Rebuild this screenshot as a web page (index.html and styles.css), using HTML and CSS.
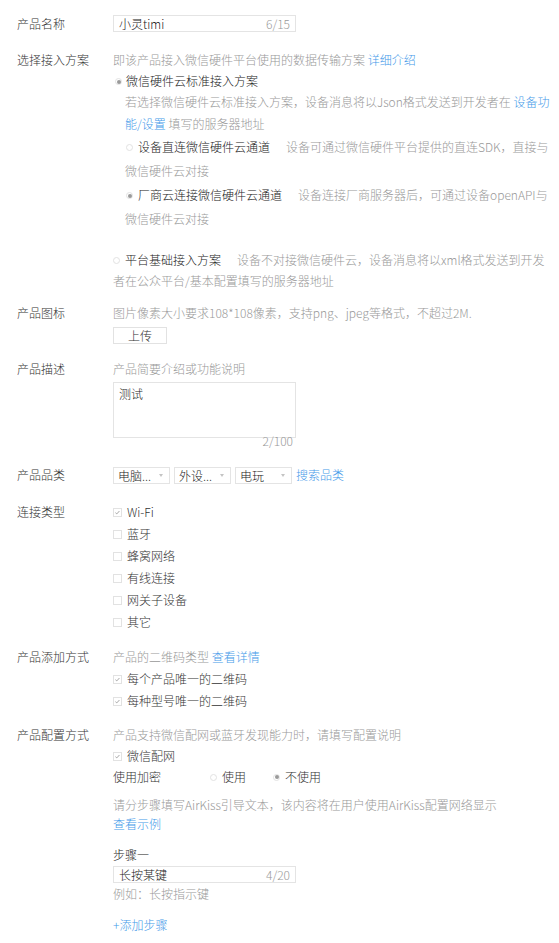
FILE: index.html
```html
<!DOCTYPE html>
<html lang="zh-CN">
<head>
  <meta charset="UTF-8" />
  <meta name="viewport" content="width=device-width, initial-scale=1.0" />
  <title>产品信息</title>
  <link rel="stylesheet" href="styles.css">
</head>
<body>
  <div class="form">

    <div class="row row-name">
      <div class="label">产品名称</div>
      <div class="field">
        <div class="input-box"><span class="val">小灵timi</span><span class="count">6/15</span></div>
      </div>
    </div>

    <div class="row row-plan">
      <div class="label">选择接入方案</div>
      <div class="field">
        <p class="hint">即该产品接入微信硬件平台使用的数据传输方案 <a href="#">详细介绍</a></p>
        <div class="opt-main">
          <div class="opt-title"><span class="radio on"></span>微信硬件云标准接入方案</div>
          <p class="hint opt-desc">若选择微信硬件云标准接入方案，设备消息将以Json格式发送到开发者在 <a href="#">设备功能/设置</a> 填写的服务器地址</p>
          <p class="hint sub"><span class="radio"></span><span class="dark">设备直连微信硬件云通道</span>设备可通过微信硬件平台提供的直连SDK，直接与微信硬件云对接</p>
          <p class="hint sub"><span class="radio on"></span><span class="dark">厂商云连接微信硬件云通道</span>设备连接厂商服务器后，可通过设备openAPI与微信硬件云对接</p>
        </div>
        <p class="hint opt-basic"><span class="radio"></span><span class="dark">平台基础接入方案</span>设备不对接微信硬件云，设备消息将以xml格式发送到开发者在公众平台/基本配置填写的服务器地址</p>
      </div>
    </div>

    <div class="row row-icon">
      <div class="label">产品图标</div>
      <div class="field">
        <p class="hint">图片像素大小要求108*108像素，支持png、jpeg等格式，不超过2M.</p>
        <button class="btn" type="button">上传</button>
      </div>
    </div>

    <div class="row row-desc">
      <div class="label">产品描述</div>
      <div class="field">
        <p class="hint">产品简要介绍或功能说明</p>
        <div class="textarea">测试</div>
        <div class="area-count">2/100</div>
      </div>
    </div>

    <div class="row row-cat">
      <div class="label">产品品类</div>
      <div class="field selects">
        <div class="select"><span>电脑...</span><i class="arrow"></i></div>
        <div class="select"><span>外设...</span><i class="arrow"></i></div>
        <div class="select"><span>电玩</span><i class="arrow"></i></div>
        <a href="#">搜索品类</a>
      </div>
    </div>

    <div class="row row-conn">
      <div class="label">连接类型</div>
      <div class="field">
        <div class="check"><span class="box"><svg viewBox="0 0 8 8"><path d="M1.6 4.2 L3.2 5.6 L6.2 2.3" /></svg></span>Wi-Fi</div>
        <div class="check"><span class="box"></span>蓝牙</div>
        <div class="check"><span class="box"></span>蜂窝网络</div>
        <div class="check"><span class="box"></span>有线连接</div>
        <div class="check"><span class="box"></span>网关子设备</div>
        <div class="check"><span class="box"></span>其它</div>
      </div>
    </div>

    <div class="row row-add">
      <div class="label">产品添加方式</div>
      <div class="field">
        <p class="hint">产品的二维码类型 <a href="#">查看详情</a></p>
        <div class="check"><span class="box"><svg viewBox="0 0 8 8"><path d="M1.6 4.2 L3.2 5.6 L6.2 2.3" /></svg></span>每个产品唯一的二维码</div>
        <div class="check"><span class="box"><svg viewBox="0 0 8 8"><path d="M1.6 4.2 L3.2 5.6 L6.2 2.3" /></svg></span>每种型号唯一的二维码</div>
      </div>
    </div>

    <div class="row row-config">
      <div class="label">产品配置方式</div>
      <div class="field">
        <p class="hint">产品支持微信配网或蓝牙发现能力时，请填写配置说明</p>
        <div class="check check-wx"><span class="box"><svg viewBox="0 0 8 8"><path d="M1.6 4.2 L3.2 5.6 L6.2 2.3" /></svg></span>微信配网</div>
        <div class="encrypt">
          <span class="enc-label">使用加密</span>
          <span class="choice"><span class="radio"></span>使用</span>
          <span class="choice"><span class="radio on"></span>不使用</span>
        </div>
        <p class="hint steps-hint">请分步骤填写AirKiss引导文本，该内容将在用户使用AirKiss配置网络显示<a class="block-link" href="#">查看示例</a></p>
        <div class="step-title">步骤一</div>
        <div class="input-box"><span class="val">长按某键</span><span class="count">4/20</span></div>
        <p class="hint">例如：长按指示键</p>
        <a class="add-step" href="#">+添加步骤</a>
      </div>
    </div>

  </div>
</body>
</html>
```

FILE: styles.css
```css
body {
  margin: 0;
  padding: 0;
  background: #fff;
  font-family: "Noto Sans CJK SC", "Noto Sans", sans-serif;
  font-size: 12px;
  font-weight: 300;
  color: #333;
}

p {
  margin: 0;
}

a {
  color: #459ae9;
  text-decoration: none;
}

.form {
  padding: 13px 4px 0 17px;
}

.row {
  display: flex;
  line-height: 22px;
}

.label {
  width: 96px;
  flex: none;
  color: #333;
}

.field {
  width: 442px;
}

.hint {
  color: #999;
}

.dark {
  color: #222;
  margin-right: 16px;
}

/* inputs */
.input-box {
  display: flex;
  justify-content: space-between;
  align-items: center;
  width: 171px;
  height: 15px;
  padding: 0 5px;
  border: 1px solid #e4e4e4;
  line-height: 15px;
  margin: 2px 0 3px;
}

.input-box .val {
  color: #222;
}

.input-box .count {
  color: #999;
}

/* radios & checkboxes */
.radio {
  display: inline-flex;
  align-items: center;
  justify-content: center;
  width: 5px;
  height: 5px;
  border: 1px solid #e2e2e2;
  border-radius: 50%;
  vertical-align: middle;
  margin-top: -2px;
}

.radio.on::after {
  content: "";
  width: 4px;
  height: 4px;
  border-radius: 50%;
  background: #9a9a9a;
}

.check {
  display: flex;
  align-items: center;
  color: #333;
}

.box {
  display: inline-flex;
  width: 7px;
  height: 7px;
  border: 1px solid #e2e2e2;
  margin-right: 5px;
}

.box svg {
  width: 7px;
  height: 7px;
}

.box path {
  fill: none;
  stroke: #999;
  stroke-width: 1;
}

/* access plan */
.row-name {
  margin-bottom: 14px;
}

.opt-main {
  padding-left: 12px;
}

.opt-title {
  line-height: 20px;
  color: #222;
}

.opt-title .radio {
  margin-left: -10px;
  margin-right: 4px;
}

.opt-desc {
  line-height: 22px;
}

.sub {
  line-height: 24px;
}

.sub .radio {
  margin-left: 1px;
  margin-right: 5px;
}

.opt-basic {
  line-height: 21px;
  margin-top: 18px;
}

.opt-basic .radio {
  margin-right: 5px;
}

/* icon */
.row-icon {
  margin-top: 11px;
}

.btn {
  display: block;
  width: 54px;
  height: 17px;
  margin-top: 3px;
  padding: 0;
  border: 1px solid #e2e2e2;
  background: #fff;
  font-family: inherit;
  font-size: 12px;
  font-weight: 300;
  line-height: 15px;
  color: #333;
}

/* description */
.row-desc {
  margin-top: 14px;
}

.textarea {
  width: 171px;
  height: 44px;
  margin-top: 2px;
  padding: 5px;
  border: 1px solid #e4e4e4;
  line-height: 12px;
  color: #222;
}

.area-count {
  width: 180px;
  margin-top: -3px;
  text-align: right;
  line-height: 12px;
  color: #999;
}

/* category */
.row-cat {
  margin-top: 17px;
}

.selects {
  display: flex;
  align-items: center;
  gap: 4px;
}

.select {
  display: flex;
  justify-content: space-between;
  align-items: center;
  width: 45px;
  height: 15px;
  padding: 0 6px 0 4px;
  border: 1px solid #e4e4e4;
  line-height: 15px;
  color: #222;
}

.arrow {
  width: 0;
  height: 0;
  border-left: 2.5px solid transparent;
  border-right: 2.5px solid transparent;
  border-top: 3px solid #c4c4c4;
}

/* connection */
.row-conn {
  margin-top: 15px;
}

.row-add {
  margin-top: 13px;
}

/* config */
.row-config {
  margin-top: 12px;
}

.check-wx {
  line-height: 20px;
}

.encrypt {
  display: flex;
  align-items: center;
}

.enc-label {
  width: 97px;
  color: #333;
}

.choice {
  display: inline-flex;
  align-items: center;
  margin-right: 27px;
  color: #333;
}

.choice .radio {
  margin-top: 0;
  margin-right: 5px;
}

.steps-hint {
  margin-top: 7px;
  line-height: 19px;
}

.block-link {
  display: block;
}

.step-title {
  margin-top: 11px;
  color: #222;
}

.step-title + .input-box {
  margin: 0;
}

.add-step {
  display: inline-block;
  margin-top: 9px;
}
```
